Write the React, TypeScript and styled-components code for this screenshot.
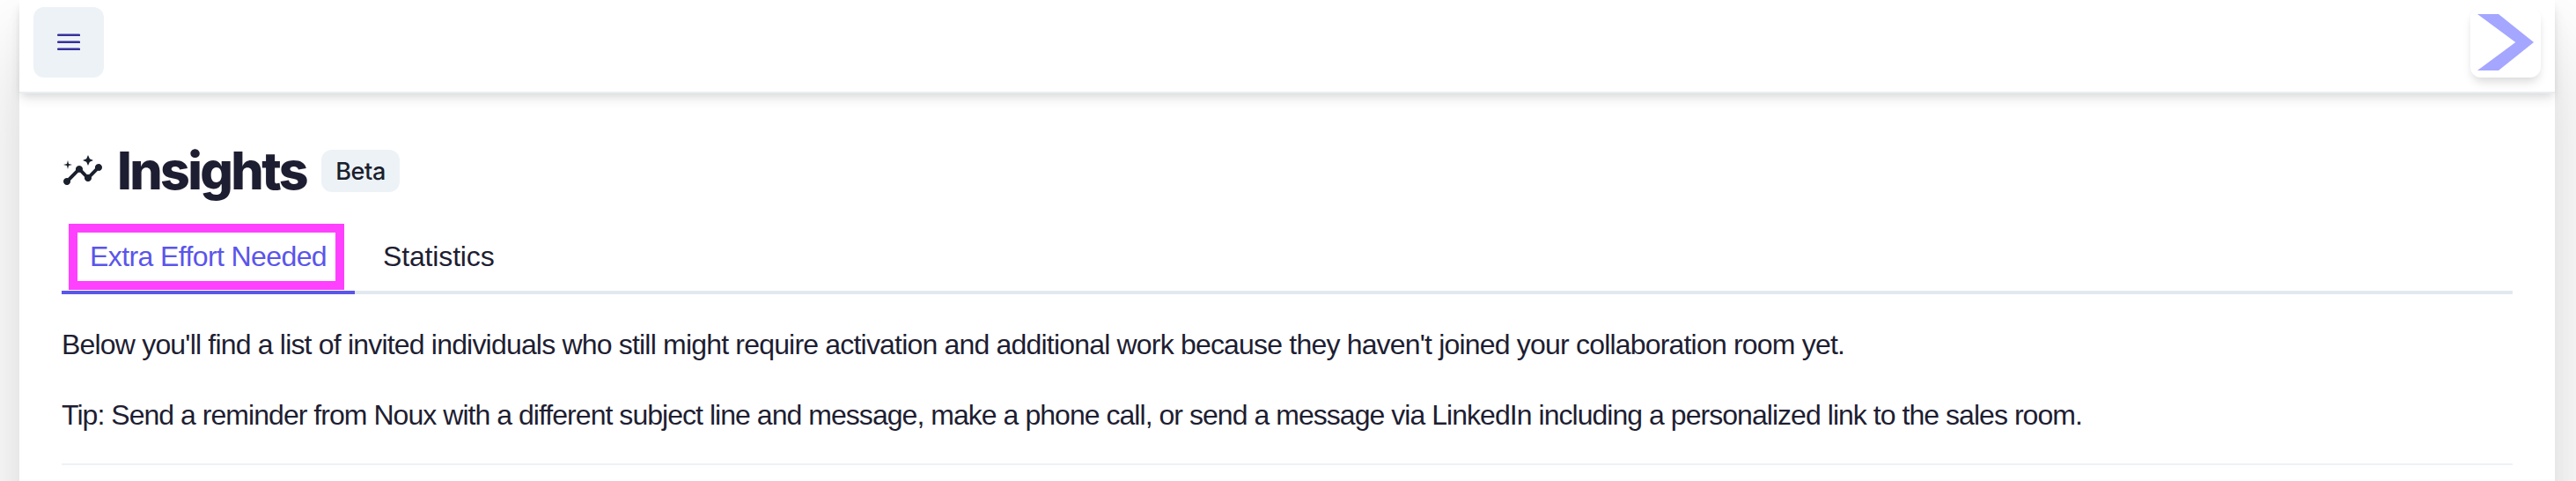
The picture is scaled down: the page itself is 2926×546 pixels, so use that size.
import React from "react";
import styled, { createGlobalStyle } from "styled-components";
import { MdInsights } from "react-icons/md";

const GlobalStyle = createGlobalStyle`
  *, *::before, *::after { box-sizing: border-box; }
  body {
    margin: 0;
    overflow: hidden;
    background: #fff;
    color: #1e1e32;
    font-family: "Liberation Sans", Arial, sans-serif;
    font-size: 32px;
  }
`;

const Page = styled.div`
  height: 546px;
  padding: 0 24px 0 22px;
  overflow: hidden;
`;

const Sheet = styled.main`
  height: 1200px;
  background: #fff;
  box-shadow: 0 50px 100px rgba(0, 0, 0, 0.16), 0 16px 24px rgba(0, 0, 0, 0.03);
`;

const TopBar = styled.header`
  display: flex;
  justify-content: space-between;
  height: 106px;
  padding: 8px 16px 0;
  background: #fff;
  border-bottom: 2px solid #e8eef3;
  box-shadow: 0 8px 12px -2px rgba(0, 0, 0, 0.1), 0 4px 8px -2px rgba(0, 0, 0, 0.06);
`;

const MenuButton = styled.button`
  display: grid;
  place-items: center;
  width: 80px;
  height: 80px;
  padding: 0;
  border: 0;
  border-radius: 12px;
  background: #edf2f7;
`;

const LogoTile = styled.div`
  width: 80px;
  height: 80px;
  padding: 8px;
  border-radius: 12px;
  background: #fff;
  box-shadow: 0 8px 12px -2px rgba(0, 0, 0, 0.1), 0 4px 8px -2px rgba(0, 0, 0, 0.06);
`;

const Content = styled.section`
  padding: 64px 48px 0;
`;

const TitleRow = styled.div`
  display: flex;
  align-items: flex-start;
  height: 84px;
  svg { flex: none; color: #1a202c; }
`;

const Title = styled.h1`
  width: 228px;
  margin: -12px 0 0 15px;
  font: 800 59px/72px Inter, sans-serif;
  letter-spacing: -2.65px;
  white-space: nowrap;
`;

const Badge = styled.span`
  height: 48px;
  width: 89px;
  margin-left: 4px;
  border-radius: 12px;
  background: #edf2f7;
  color: #1a202c;
  font: 500 27px/49px Inter, sans-serif;
  letter-spacing: -0.4px;
  text-align: center;
`;

const Tabs = styled.nav`
  display: flex;
  height: 80px;
  border-bottom: 4px solid #e2e8f0;
`;

const Tab = styled.button<{ $active?: boolean }>`
  position: relative;
  width: ${(p) => (p.$active ? "333px" : "auto")};
  height: 80px;
  padding: 0 32px 3px;
  border: 0;
  border-bottom: 4px solid ${(p) => (p.$active ? "#5a55eb" : "transparent")};
  background: none;
  color: ${(p) => (p.$active ? "#5a55eb" : "#1e1e32")};
  font: inherit;
  line-height: 72px;
  letter-spacing: ${(p) => (p.$active ? "-0.6px" : "-0.15px")};
  white-space: nowrap;
`;

const Highlight = styled.span`
  position: absolute;
  inset: 0 12px 1px 8px;
  border: 10px solid #ff40ff;
`;

const Copy = styled.div`
  padding: 37px 0 35px;
  border-bottom: 2px solid #edf2f7;
  line-height: 40px;
`;

const Paragraph = styled.p<{ $tracking: number }>`
  margin: 0 0 40px;
  letter-spacing: ${(p) => p.$tracking}px;
  white-space: nowrap;
  &:last-child { margin-bottom: 0; }
`;

export default function App() {
  return (
    <Page>
      <GlobalStyle />
      <Sheet>
        <TopBar>
          <MenuButton aria-label="Menu">
            <svg width="26" height="20" viewBox="0 0 26 20" stroke="#37309a" strokeWidth="2.5" strokeLinecap="round">
              <path d="M1.2 1.8h23.8M1.2 9.8h23.8M1.2 17.8h23.8" />
            </svg>
          </MenuButton>
          <LogoTile>
            <svg width="64" height="64" viewBox="0 0 64 64" fill="#a5a6ff" display="block">
              <path d="M0 0H24L64 32L24 64H0L43.3 32Z" />
            </svg>
          </LogoTile>
        </TopBar>
        <Content>
          <TitleRow>
            <MdInsights size={48} />
            <Title>Insights</Title>
            <Badge>Beta</Badge>
          </TitleRow>
          <Tabs>
            <Tab $active>
              Extra Effort Needed
              <Highlight />
            </Tab>
            <Tab>Statistics</Tab>
          </Tabs>
          <Copy>
            <Paragraph $tracking={-0.81}>
              Below you'll find a list of invited individuals who still might require activation and additional work
              because they haven't joined your collaboration room yet.
            </Paragraph>
            <Paragraph $tracking={-0.96}>
              Tip: Send a reminder from Noux with a different subject line and message, make a phone call, or send a
              message via LinkedIn including a personalized link to the sales room.
            </Paragraph>
          </Copy>
        </Content>
      </Sheet>
    </Page>
  );
}
